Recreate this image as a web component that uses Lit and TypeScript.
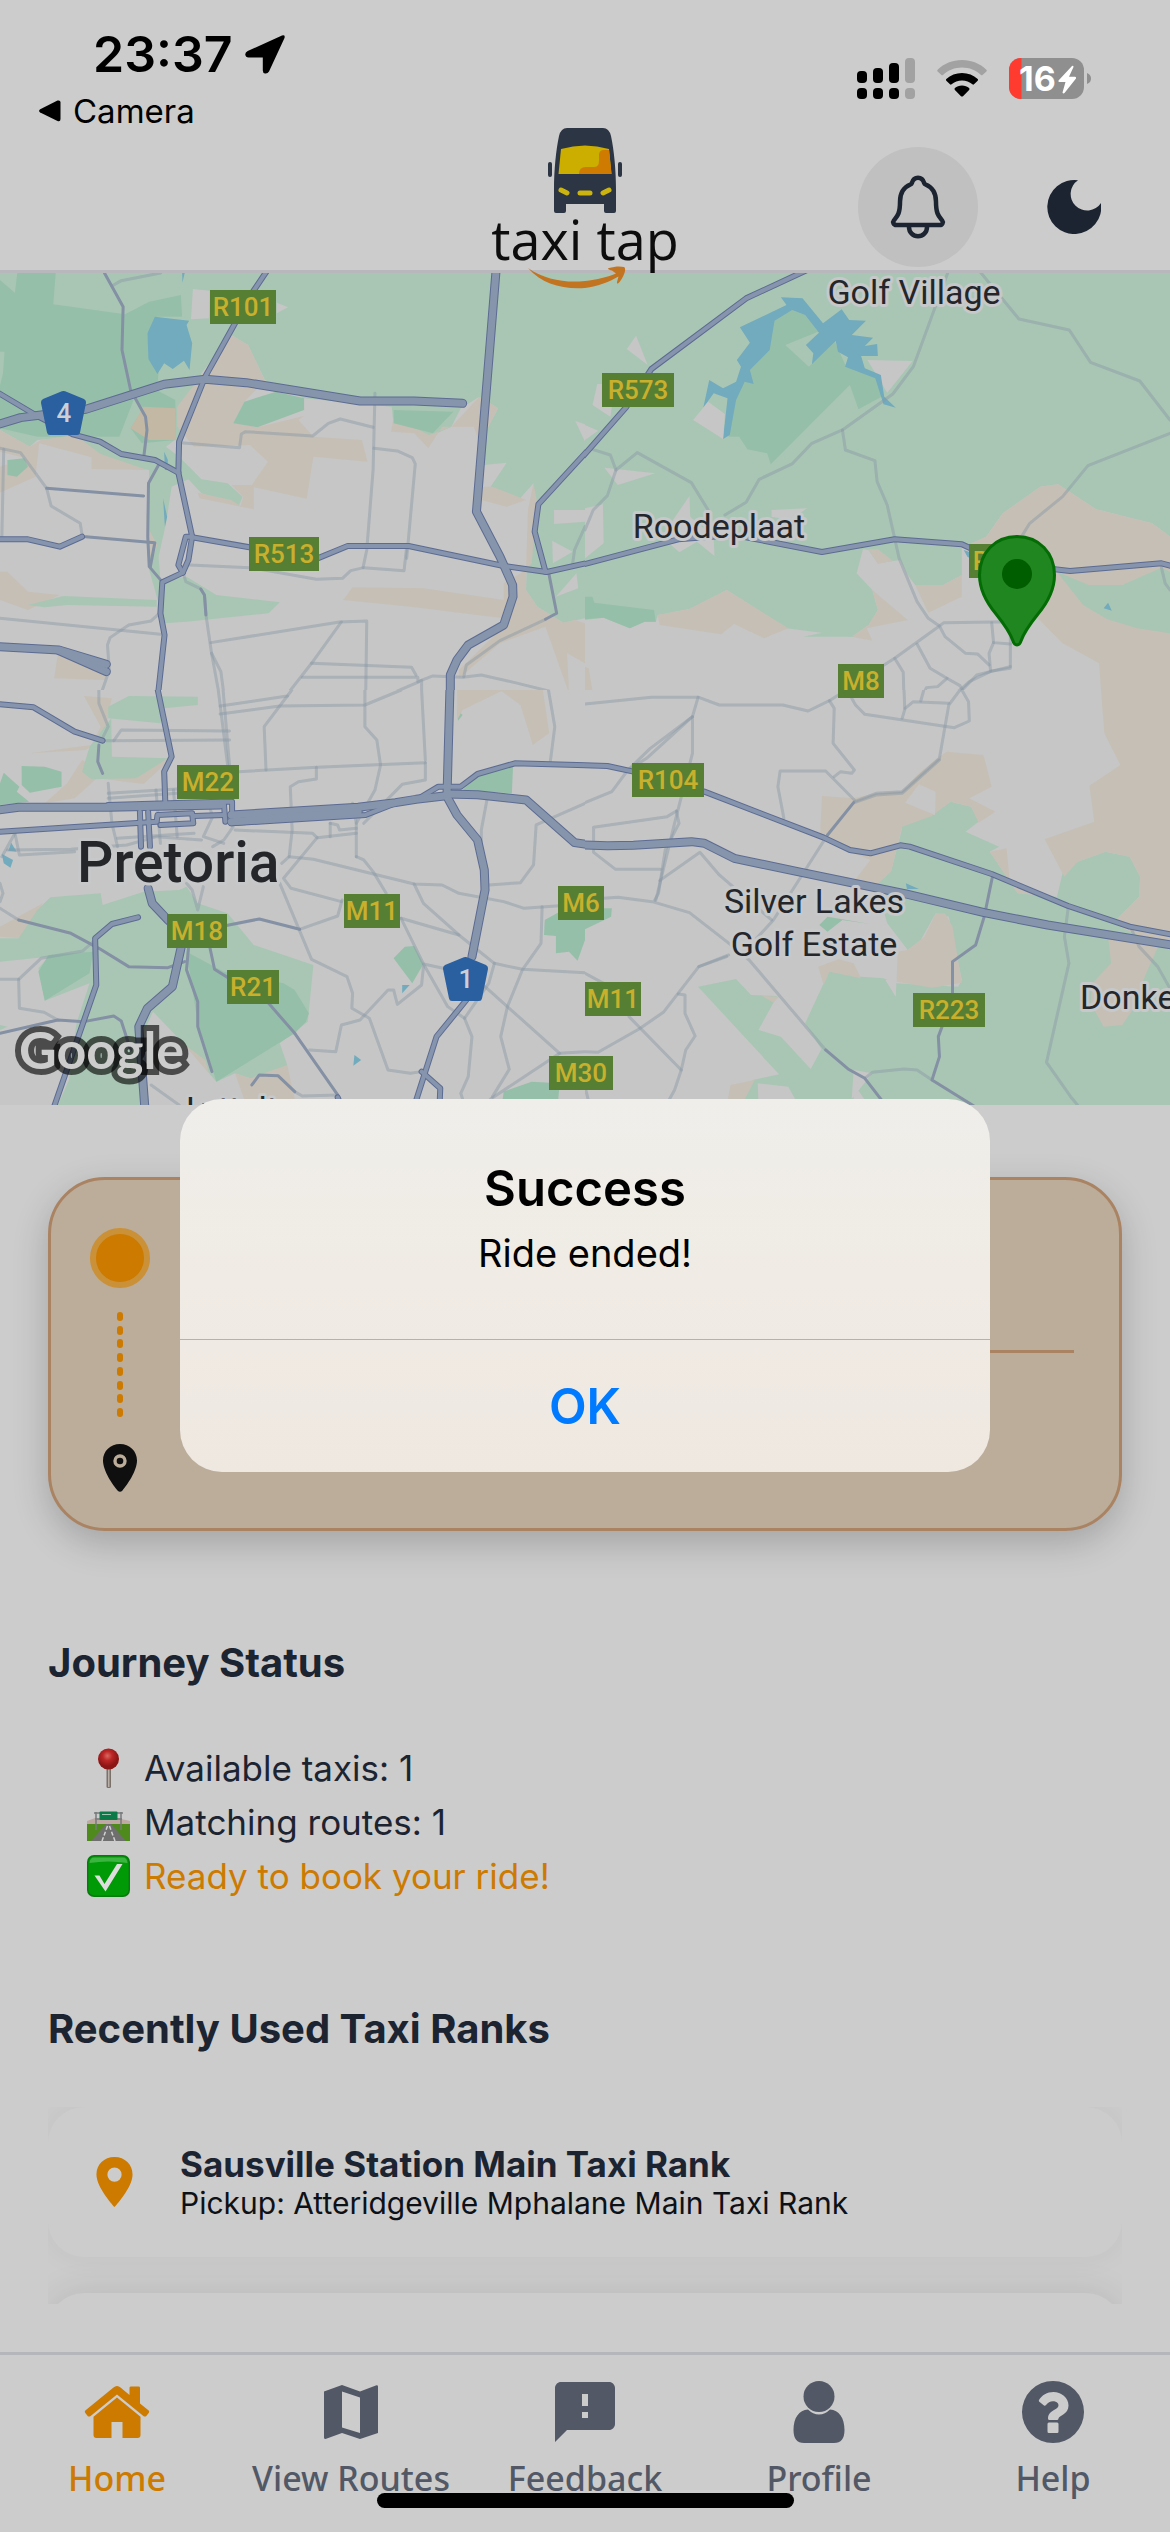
import { LitElement, html, svg, css } from "lit";
import { customElement, property } from "lit/decorators.js";
import { classMap } from "lit/directives/class-map.js";

interface Tile {
  id: string;
  x: number;
  y: number;
  /** Filled areas, painted in order: class name and polygon points. */
  areas: [string, string][];
  minor: string[];
  secondary: string[];
  major: string[];
  highway: string[];
}

/* Map geometry, held as four tiles of 1568 x 1290 units each. */
const TILES: Tile[] = [
  {
    id: "nw",
    x: 0,
    y: 270,
    areas: [
      ["park", "0,0 1568,0 1568,1045 1510,1058 1440,1010 1410,960 1412,890 1430,640 1390,690 1315,650 1358,578 1297,585 1290,510 1335,415 1285,380 1235,415 1210,470 1150,500 1055,470 1050,410 815,385 710,330 665,225 620,195 540,310 500,440 480,500 445,530 480,560 540,628 610,640 650,680 640,708 540,670 505,628 460,650 445,760 425,860 430,930 500,920 580,975 750,997 720,1030 500,1055 440,1060 400,900 400,600 330,585 270,560 210,500 100,510 80,530 0,480"],
      ["wood", "0,30 40,68 47,0 150,0 143,103 335,133 400,95 485,75 488,140 420,140 395,190 400,270 425,310 420,360 470,390 472,510 380,520 350,475 385,415 360,385 320,500 230,500 100,500 0,475"],
      ["park", "0,245 12,245 8,310 0,345"],
      ["sand", "0,480 80,530 110,510 200,495 270,552 395,600 245,597 245,562 105,520 95,620 0,668 0,590 70,565 0,545"],
      ["wood", "20,570 65,565 75,590 45,620 20,615"],
      ["sand", "620,195 665,225 710,332 655,395 625,460 690,472 815,438 800,450 840,500 970,510 985,575 840,560 822,686 680,652 680,718 535,685 530,668 620,690 645,708 652,680 620,645 675,645 718,575 670,525 520,530 475,470 475,410 530,330"],
      ["wood", "655,395 740,365 815,385 815,420 690,472 625,460"],
      ["field", "385,410 470,415 472,510 400,510 350,475"],
      ["sand", "1210,470 1285,380 1335,415 1285,520 1270,470 1185,470 1148,535 1110,490 1048,485 1055,440 1150,495"],
      ["wood", "1055,420 1215,425 1160,490 1055,460"],
      ["sand", "1290,650 1320,650 1410,690 1358,710 1290,690"],
      ["sand", "1415,720 1430,640 1440,700 1425,880 1410,900"],
      ["sand", "920,990 945,952 1135,955 1350,990 1350,940 1410,900 1410,960 1440,1010 1510,1058 1540,1050 1568,1060 1568,1180 1520,1150 1525,1270 1462,1070 1340,1120 1230,1225 1230,1200 1340,1080 1350,1045 1100,1010"],
      ["sand", "0,905 20,905 75,965 160,975 75,1020 0,990"],
      ["sand", "155,1155 290,1190 280,1230 145,1225"],
      ["sand", "225,1280 320,1270 310,1290 225,1290"],
      ["sand", "390,720 400,780 422,825 405,870 395,800"],
      ["park", "75,1005 170,978 420,990 420,1010 180,1005 120,1012"],
      ["park", "320,1290 350,1278 480,1278 540,1290"],
      ["land", "1485,720 1568,720 1568,755 1485,762"],
      ["land", "1480,812 1535,845 1482,880"],
      ["land", "1545,910 1550,955 1490,980"],
      ["land", "517,57 562,62 560,145 512,148"],
      ["land", "742,98 772,112 742,130"],
      ["land", "1542,453 1568,463 1568,515"],
      ["water", "415,140 507,152 500,165 515,220 508,300 493,272 463,297 440,280 422,312 398,268 395,190"],
      ["water", "488,0 495,9 489,38"],
      ["water", "440,545 450,570 448,600 442,600"],
      ["water", "437,685 448,740 442,770"],
    ],
    minor: [
      "300,48 325,32 430,9",
      "485,518 642,533 647,492 658,485 838,498 880,460 912,447 1000,472",
      "1005,370 1000,600 983,840 973,893",
      "1002,535 1065,543 1105,563 1113,582 1090,865",
      "1090,830 1083,902 975,893 940,902 918,925 848,928 670,893 508,885",
      "0,535 55,548 125,655 137,708 215,760 220,795",
      "10,538 5,800",
      "490,905 498,935 538,957 548,975 552,1035 567,1150 590,1290",
      "567,1150 592,1205 602,1290",
      "565,1118 910,1056 983,1053 980,1290",
      "915,1056 835,1180 765,1280 690,1290",
      "835,1180 1103,1192 1115,1215",
      "810,1222 1120,1222 1120,1235 1160,1218 1240,1222 1290,1215 1380,1238 1568,1290",
      "1010,1290 1130,1232 1130,1290",
      "0,1045 430,1093",
      "427,1030 405,1053 345,1065 295,1103 288,1125 293,1200 265,1290",
      "1243,1220 1250,1185 1340,1112 1462,1048",
      "1535,880 1540,840 1568,770",
      "1470,1270 1475,1290",
    ],
    secondary: [
      "280,9 330,110 327,240 350,360 390,440 394,480 386,555",
      "125,655 385,678",
      "230,800 415,818 403,890",
      "425,585 398,640 396,800 400,890 432,932",
      "538,957 548,975 552,1035",
      "1470,905 1492,1030 1462,1048",
    ],
    major: [
      "720,-5 672,75 590,240 550,320 480,515 478,608 515,800 505,870 490,908 435,937 430,1030 441,1095 422,1290",
      "515,800 498,800 478,885 490,908",
      "-10,365 100,438 195,493 268,515 325,552 415,570 478,608",
      "515,802 700,838 830,875 932,828 1095,828 1350,888 1465,906 1578,878",
      "-10,808 75,808 160,830 220,800",
      "1578,538 1443,703 1433,785 1462,905",
    ],
    highway: [
      "1330,-5 1277,725 1340,860 1374,945 1375,980 1350,1065 1255,1125 1225,1170 1207,1215 1207,1295",
      "-10,465 55,443 110,435 230,418 440,343 550,328 660,338 965,393 1110,393 1240,400",
      "-10,1130 158,1140 285,1183",
      "158,1142 285,1205",
    ],
  },
  {
    id: "ne",
    x: 585,
    y: 270,
    areas: [
      ["park", "0,0 1568,0 1568,800 1520,760 1370,718 1268,643 1220,650 1120,730 1075,800 1010,835 1010,915 960,945 885,945 865,915 845,870 785,880 760,840 745,838 728,910 770,960 785,1020 760,1065 715,1100 540,1075 380,960 280,1017 195,1035 190,1055 160,1055 120,1075 50,1043 0,1050"],
      ["sand", "195,1035 280,1017 380,960 545,1075 480,1105 400,1062 365,1093 200,1065"],
      ["sand", "760,838 785,838 825,872 785,882"],
      ["sand", "770,960 865,1050 755,1075 770,1112 715,1100 760,1065 785,1020"],
      ["sand", "885,945 960,945 1010,915 1010,980 920,1028"],
      ["sand", "1035,820 1075,800 1120,730 1220,650 1268,643 1370,718 1520,760 1568,800 1568,1290 1385,1290 1378,1180 1280,1120 1200,1030 1120,920 1050,880"],
      ["park", "1265,905 1350,945 1440,945 1545,893 1568,905 1568,1090 1480,1075 1400,1048 1335,1005"],
      ["park", "585,1100 700,1073 720,1100"],
      ["wood", "525,120 555,120 590,135 625,185 537,225 600,290 670,215 700,290 785,320 795,380 733,418 710,345 498,583 488,550 435,538 413,500 385,500 385,450 415,340 500,150"],
      ["wood", "0,980 20,980 25,998 185,1020 190,1055 160,1055 120,1075 50,1043 0,1048"],
      ["land", "137,197 168,285 112,237"],
      ["land", "33,342 45,342 45,400 72,410 68,440 20,405"],
      ["land", "0,465 35,482 0,510"],
      ["land", "757,270 878,273 810,368"],
      ["land", "52,593 188,610 88,645"],
      ["land", "280,678 282,740 345,800 347,858 300,815 253,847 205,800"],
      ["land", "500,720 595,715 550,750 500,740"],
      ["land", "0,715 48,703 50,820 0,865"],
      ["sand", "0,1190 10,1195 20,1262 0,1262"],
      ["water", "525,82 583,85 638,160 688,118 708,150 753,152 715,195 772,203 750,228 783,222 785,258 740,258 750,295 793,315 802,380 833,413 800,403 778,325 697,290 705,262 678,245 672,213 608,283 612,250 592,225 627,188 590,135 555,120 508,152 495,240 442,300 452,342 428,335 405,390 388,495 370,507 382,385 345,370 317,413 333,330 370,355 405,335 418,290 407,270 442,218 415,172 540,105"],
      ["land", "330,395 375,432 370,507 290,450"],
      ["water", "1402,998 1412,1022 1390,1015"],
      ["water", "1015,840 1040,850 1040,870 1025,860"],
    ],
    minor: [
      "975,0 880,290 825,372 690,480 608,520 555,582 467,628 432,697 375,735",
      "690,480 698,540 777,572 783,635 810,705 842,865 890,995 920,1045 950,1068 965,1100 1020,1150 1052,1152 1083,1185",
      "1055,0 1163,147 1298,180 1355,277 1487,333 1568,450",
      "1568,490 1348,587 1280,680 1192,760 1170,800",
      "20,538 68,555 83,600 60,677 22,720 0,780",
      "83,600 140,548 285,638 330,720",
      "650,1290 675,1275 830,1165 950,1068 962,1058 1140,1055 1140,1195 1090,1203 1030,1235 975,1290",
      "1140,1190 1050,1215 985,1290",
      "830,1165 853,1207 855,1290",
      "890,1122 925,1195 970,1225 945,1250 915,1253 900,1290",
      "970,1225 1005,1247 1027,1290",
      "1090,1058 1095,1118 1140,1122",
      "1095,1118 1083,1150 1087,1203",
      "0,1294 178,1282 305,1282 340,1290",
      "1545,893 1555,940 1568,960",
    ],
    secondary: [],
    major: [
      "605,-5 432,85 178,297 110,412 -10,565",
      "-10,885 250,808 400,795 635,846 830,808 1010,823 1120,880 1300,903 1545,880 1578,890",
    ],
    highway: [],
  },
  {
    id: "sw",
    x: 0,
    y: 690,
    areas: [
      ["sand", "225,18 300,25 290,70 285,140 230,180 80,190 245,165 270,110"],
      ["sand", "220,210 300,260 460,205 385,282 260,265 200,325 120,340 180,280"],
      ["sand", "0,710 115,640 60,745 0,740"],
      ["park", "290,50 345,18 530,20 530,45 440,55 430,100 290,85"],
      ["park", "240,170 298,85 300,200 450,205 365,265 245,268 220,245"],
      ["wood", "58,228 120,230 165,245 165,290 80,308 58,285"],
      ["wood", "10,248 52,290 45,305 78,335 0,345 0,280"],
      ["park", "0,745 50,745 100,660 135,622 270,610 275,645 385,605 480,600 500,590 530,640 610,670 680,765 840,825 825,995 790,1025 750,1060 770,1125 740,1160 670,1165 630,1150 580,1175 500,1070 410,965 380,1040 400,1245 155,1245 185,1170 205,1000 240,880 120,932 103,835 130,800 0,815"],
      ["wood", "500,785 600,845 760,880 790,900 828,970 820,995 790,1030 580,1175 530,1000"],
      ["wood", "103,845 130,795 250,785 240,850 120,932"],
      ["wood", "1240,300 1290,245 1375,230 1372,310"],
      ["wood", "1055,805 1085,770 1110,768 1135,822 1105,880"],
      ["wood", "1460,690 1500,665 1568,690 1568,750 1548,812 1525,785 1490,790 1490,738 1458,735"],
      ["wood", "1345,1245 1350,1205 1425,1175 1500,1180 1495,1245"],
      ["wood", "1225,60 1240,75 1228,92"],
      ["sand", "1225,0 1350,0 1240,60 1225,90"],
      ["sand", "1340,0 1455,0 1472,130 1428,165 1395,45"],
      ["sand", "490,1060 550,1110 560,1150"],
      ["sand", "630,1150 670,1165 770,1125 790,1227 660,1245"],
      ["park", "0,1005 20,1010 0,1020"],
      ["water", "30,458 45,485 22,482"],
      ["water", "5,492 35,510 28,533 10,520"],
      ["water", "1078,885 1098,885 1078,910"],
      ["water", "950,1095 968,1110 947,1127"],
    ],
    minor: [
      "265,0 265,40 290,110 270,155",
      "290,280 300,400 315,470",
      "285,152 615,150",
      "305,152 325,120 615,123",
      "585,0 610,225",
      "598,0 615,225",
      "590,48 770,18 782,0",
      "590,72 750,48 978,45 1075,0",
      "770,18 708,110 713,240",
      "978,0 978,110 1010,150 1020,225 1005,300 955,400 955,500",
      "1130,0 1140,210",
      "1140,218 1140,270 1078,283 975,400",
      "640,245 850,232 1140,218",
      "848,232 848,267 800,275 778,290 783,420 775,500 755,520",
      "290,310 475,297",
      "290,325 475,310",
      "418,300 430,460",
      "465,300 475,440",
      "630,420 838,430 850,443 955,430",
      "850,443 760,565 780,595 915,635",
      "775,500 840,508 1110,582 1185,585 1230,610 1350,635 1405,655 1500,647",
      "955,500 975,510 1000,545 1035,610",
      "1310,585 1395,578 1430,525 1437,405 1568,340",
      "1305,330 1290,420 1290,460",
      "750,580 835,808 930,860 945,910 943,955 990,985 1040,1140 1100,1150 1130,1145",
      "803,718 905,678 917,630",
      "1110,582 1135,640 1230,735 1325,820 1400,838 1568,848",
      "1075,685 1230,735",
      "1075,685 1135,822 1200,950 1245,985 1265,1040 1255,1160 1235,1210 1245,1245",
      "1135,822 1188,835",
      "1135,830 1130,885 1065,943 1055,900 1040,900 965,990 915,1005 900,1085 830,1080",
      "1453,650 1450,760 1400,840 1360,950 1342,1040 1365,1138 1320,1220",
      "1300,890 1500,1090 1568,1085",
      "1500,1090 1315,1227",
      "1325,820 1310,880 1245,985",
      "1470,0 1487,110 1475,215",
      "0,655 50,690",
      "250,755 222,783 110,805 50,868 0,868",
      "50,868 52,955 118,967 155,990",
      "560,345 570,380 545,440 600,460",
      "625,410 600,450 570,470",
      "315,445 520,430",
      "20,480 190,478 340,465 420,440 540,450",
      "40,430 52,495 200,485",
      "40,430 5,500",
      "0,580 8,610 0,635",
      "500,580 515,600 530,660 545,590",
      "945,340 955,400",
      "885,400 905,405 910,420 955,415",
      "885,400 885,440",
      "405,1185 480,1245",
      "905,1215 810,1218 790,1205",
    ],
    secondary: [
      "50,690 190,730 265,775 345,830 450,833 495,815",
      "505,775 500,840 530,935 530,1010 568,1145",
      "563,775 575,838 720,940 790,1030",
      "265,165 262,215 275,250",
      "675,1185 695,1155 745,1157 790,1205",
      "0,1030 155,990 225,995 305,978 325,993 350,1080",
      "600,708 695,687 803,718",
      "790,1030 905,1215",
    ],
    major: [
      "422,-5 460,200 440,245 443,335",
      "-10,42 90,52 200,125 275,152",
      "-10,426 420,395 422,375 515,370 518,400 430,405",
      "375,365 378,470",
      "397,365 402,470",
      "520,378 600,375",
      "370,682 300,702 255,745 258,885 145,1250",
      "1250,930 1170,1040 1110,1250",
      "1130,1145 1180,1195 1178,1250",
      "905,1222 915,1250",
      "1115,330 1175,290 1235,290 1280,252 1380,220 1578,226",
      "600,340 604,395",
      "290,345 590,335 622,335 622,370",
      "620,400 980,375 1060,340",
    ],
    highway: [
      "-10,361 50,352 190,352 290,352 590,345",
      "620,375 960,352 1060,338 1115,328 1190,318",
      "620,395 960,365",
      "1206,-5 1198,320 1225,375 1280,450 1298,540 1300,600 1265,800",
      "1198,312 1280,314 1410,330 1540,458 1578,464",
      "397,595 408,640 450,690 480,720",
      "485,775 462,890 395,955 372,1010 388,1250",
    ],
  },
  {
    id: "se",
    x: 585,
    y: 690,
    areas: [
      ["park", "825,402 930,375 980,335 1035,350 1055,395 1020,425 1110,470 1085,485 1160,610 1265,620 1280,550 1320,515 1395,485 1460,500 1488,560 1485,620 1415,700 1568,780 1568,1245 760,1245 700,1150 635,1080 590,1000 655,843 740,860 800,865 835,880 1000,890 1010,870 975,680 940,670 900,750 865,780 810,700 780,585 820,545 850,415"],
      ["park", "303,890 405,867 445,915 515,918 465,1020 525,1040 605,1137 635,1075 720,1150 720,1245 410,1245 450,1170 520,1153"],
      ["sand", "635,318 720,325 780,310 850,303 895,250 950,200 970,185 1068,195 1090,290 1030,325 1100,365 1055,398 1035,350 980,335 930,378 850,410 820,545 780,585 720,575 765,510 700,480 630,440"],
      ["land", "895,283 940,305 938,375 858,338"],
      ["sand", "1383,0 1568,0 1568,780 1415,700 1485,620 1488,560 1460,500 1395,485 1320,515 1285,560 1232,448 1365,395 1352,287 1435,225 1392,130"],
      ["sand", "940,670 965,670 985,710 1010,878 930,893 835,875 838,785 865,780 910,740"],
      ["sand", "625,830 680,808 720,820 740,865 655,845 640,885"],
      ["sand", "1400,720 1540,760 1500,860 1480,940 1440,1005 1390,1010 1355,940 1360,880 1410,820"],
      ["sand", "1085,485 1130,475 1138,570 1210,615 1160,610"],
      ["sand", "390,1185 455,1170 420,1245 380,1245"],
      ["sand", "475,918 520,920 505,938"],
      ["land", "805,870 835,865 833,920"],
      ["land", "720,1140 770,1150 715,1227"],
      ["land", "463,1180 545,1190 572,1245 465,1245"],
      ["wood", "0,670 50,655 72,655 70,680 0,718"],
      ["wood", "628,705 650,680 765,702 690,690 650,725"],
      ["water", "860,580 895,597 863,597"],
    ],
    minor: [
      "0,42 178,22 305,22 360,45 530,45 598,63 655,32 700,0",
      "303,22 288,80 175,175 115,240 72,305 0,338",
      "288,80 288,190 240,400 190,630",
      "288,80 165,205 115,240",
      "655,32 668,55 665,160 722,240 715,250 685,245 668,260",
      "533,385 517,290 523,243 645,243 722,330",
      "650,435 505,690 460,745",
      "722,335 780,310 850,305 950,205 975,45 1005,0",
      "722,338 780,315 850,310 950,210",
      "715,25 725,45 750,73 990,113 1030,93 1028,35 1010,0",
      "850,85 858,55 880,35 975,40",
      "855,0 857,55",
      "908,0 900,33",
      "245,363 220,380 23,412 23,487 82,538 203,538",
      "245,363 252,400 215,480 197,610 187,630",
      "200,572 308,487 360,555 500,690",
      "50,625 88,622 180,635 280,668 380,755 440,810 645,1080",
      "385,795 305,830 210,967 145,1017 35,1087 0,1085",
      "380,800 305,830",
      "250,912 268,915 268,970 295,1038 270,1080 258,1140 240,1200 218,1245",
      "118,980 258,1140",
      "0,850 50,880",
      "1295,655 1285,740 1297,820 1237,1117 1305,1225 1320,1245",
      "1465,718 1485,770 1535,830 1565,890",
      "750,1165 770,1147 855,1137 890,1140 930,1170",
      "0,1190 12,1245",
    ],
    secondary: [
      "1093,555 1070,680 1047,765 985,815 985,910",
      "957,1010 947,1040 950,1100 930,1170 1045,1250",
      "645,1080 705,1137 750,1165 805,1245",
      "720,338 650,435",
    ],
    major: [
      "-10,225 60,228 130,245 320,305 640,443 710,480 765,490 845,466 870,470 1090,552 1295,648 1460,710 1578,735",
    ],
    highway: [
      "-10,465 60,467 130,466 285,455 320,460 400,505 570,545 860,612 1070,668 1240,705 1578,766",
    ],
  },
];

/* Route badges: label, left, top, width. */
const BADGES: [string, number, number, number][] = [
  ["R101", 210, 290, 66],
  ["R573", 602, 373, 72],
  ["R513", 249, 537, 70],
  ["R", 969, 544, 36],
  ["M8", 838, 664, 46],
  ["M22", 177, 765, 62],
  ["R104", 632, 763, 72],
  ["M6", 558, 886, 46],
  ["M11", 344, 894, 56],
  ["M18", 167, 914, 60],
  ["R21", 227, 970, 52],
  ["M11", 585, 982, 56],
  ["R223", 913, 993, 72],
  ["M30", 549, 1056, 64],
];

const PLACES: [string, number, number][] = [
  ["Golf Village", 914, 304],
  ["Roodeplaat", 719, 538],
  ["Silver Lakes", 814, 913],
  ["Golf Estate", 814, 956],
];

@customElement("route-map")
class RouteMap extends LitElement {
  static styles = css`
    :host {
      display: block;
    }
    .map {
      display: block;
      width: 100%;
      height: auto;
      font-family: Roboto, "Liberation Sans", sans-serif;
    }
    .land { fill: #c6c6c6; }
    .park { fill: #a9c6b4; }
    .wood { fill: #96bfa9; }
    .sand { fill: #c6bfb5; }
    .field { fill: #c3b8a4; }
    .water { fill: #71abbd; }
    .road {
      fill: none;
      stroke-linejoin: round;
      stroke-linecap: round;
      vector-effect: non-scaling-stroke;
    }
    .minor { stroke: #8797a4; stroke-opacity: 0.45; stroke-width: 3px; }
    .secondary { stroke: #8490a4; stroke-width: 3px; }
    .major-case { stroke: #5c6b92; stroke-width: 6px; }
    .major { stroke: #8695ad; stroke-width: 4px; }
    .highway-case { stroke: #5c6b92; stroke-width: 9px; }
    .highway { stroke: #8695ab; stroke-width: 7px; }
    .place {
      font-size: 34px;
      text-anchor: middle;
      fill: #24262a;
      stroke: #c6c8ca;
      stroke-width: 6px;
      stroke-linejoin: round;
      paint-order: stroke;
    }
    .edge { text-anchor: start; }
    .city { font-size: 57px; font-weight: 500; }
    .badge { fill: #577f34; }
    .route {
      font-size: 26px;
      font-weight: 500;
      text-anchor: middle;
      fill: #c9b02c;
    }
    .shield { fill: #2a5fa0; }
    .national {
      font-size: 26px;
      font-weight: 500;
      text-anchor: middle;
      fill: #ccd0d6;
    }
    .google {
      font-family: Lato, sans-serif;
      font-size: 52px;
      font-weight: 700;
      fill: #cccccc;
      stroke: #000000;
      stroke-opacity: 0.62;
      stroke-width: 12px;
      paint-order: stroke;
    }
    .pin { fill: #20861f; stroke: #046c04; stroke-width: 3px; }
    .pin-hole { fill: #005d00; }
  `;

  private tile(t: Tile) {
    const line = (kind: string) => (p: string) =>
      svg`<polyline class="road ${kind}" points=${p} />`;
    return svg`
      <clipPath id=${"clip-" + t.id}><rect width="1570" height="1290" /></clipPath>
      <g transform=${`translate(${t.x} ${t.y}) scale(.3731 .3333)`}>
        <g clip-path=${`url(#clip-${t.id})`}>
          <rect class="land" width="1570" height="1290" />
          ${t.areas.map(([kind, p]) => svg`<polygon class=${kind} points=${p} />`)}
          ${t.minor.map(line("minor"))}
          ${t.secondary.map(line("secondary"))}
          ${t.major.map(line("major-case"))}
          ${t.highway.map(line("highway-case"))}
          ${t.major.map(line("major"))}
          ${t.highway.map(line("highway"))}
        </g>
      </g>`;
  }

  private shield(label: string, x: number, y: number) {
    return svg`
      <g transform=${`translate(${x} ${y})`}>
        <path class="shield" d="M22.500 0Q24 0 26 1L43 8Q45.500 9.500 45 12L39 41.500Q38.500 44 36 44H9Q6.500 44 6 41.500L0 12Q-.5 9.500 2 8L19 1Q21 0 22.500 0Z" />
        <text class="national" x="23" y="31">${label}</text>
      </g>`;
  }

  render() {
    return html`
      <svg class="map" viewBox="0 273 1170 832" role="img" aria-label="Map of Pretoria">
        ${TILES.map((t) => this.tile(t))}
        ${PLACES.map(([name, x, y]) => svg`<text class="place" x=${x} y=${y}>${name}</text>`)}
        <text class="place edge" x="1080" y="1009">Donke</text>
        <text class="place edge" x="186" y="1121">Lyttelton</text>
        <text class="place city edge" x="77" y="882">Pretoria</text>
        ${BADGES.map(
          ([label, x, y, w]) => svg`
            <rect class="badge" x=${x} y=${y} width=${w} height="34" />
            <text class="route" x=${label === "R" ? x + 12 : x + w / 2} y=${y + 26}>${label}</text>`
        )}
        ${this.shield("4", 41, 391)} ${this.shield("1", 443, 957)}
        <text class="google" x="19" y="1069">Google</text>
        <path class="pin" d="M1017 536.500C995 536.500 979.500 553 979.500 575C979.500 590 986 602 996 614C1004 624 1010 632 1013 641Q1014 645 1017 645Q1020 645 1021 641C1024 632 1030 624 1038 614C1048 602 1054.500 590 1054.500 575C1054.500 553 1039 536.500 1017 536.500Z" />
        <circle class="pin-hole" cx="1017" cy="574" r="15" />
      </svg>
    `;
  }
}

@customElement("status-bar")
class StatusBar extends LitElement {
  static styles = css`
    :host {
      display: flex;
      justify-content: space-between;
      height: 126px;
      padding: 24px 79px 0 39px;
      box-sizing: border-box;
      color: #000000;
    }
    .clock {
      display: flex;
      align-items: center;
      gap: 12px;
      padding-left: 54px;
      font-size: 50px;
      font-weight: 600;
      line-height: 60px;
    }
    .back {
      display: flex;
      align-items: center;
      gap: 12px;
      margin-top: 6px;
      font-size: 33px;
      line-height: 42px;
      color: inherit;
      text-decoration: none;
    }
    .icons {
      display: flex;
      align-items: center;
      gap: 22px;
      height: 108px;
    }
    svg {
      display: block;
    }
    .dim { fill: #a2a2a2; }
    .shell { fill: #8f8f8f; }
    .low { fill: #ff3b30; }
    .charge {
      font-family: Inter, sans-serif;
      font-size: 34px;
      font-weight: 700;
      fill: #ffffff;
    }
    .bolt { fill: #ffffff; }
  `;

  render() {
    return html`
      <div>
        <div class="clock">
          <span>23:37</span>
          <svg width="40" height="39" viewBox="0 0 40 39" aria-hidden="true">
            <path d="M37 .4Q40.500-.5 39.500 3L24 36.500Q22.500 39 20 38.500Q17.800 38 17.800 35.500V22.500H3.500Q.6 22.300 .3 19.800Q0 17.500 2.700 16Z" />
          </svg>
        </div>
        <a class="back" href="#camera">
          <svg width="22" height="22" viewBox="0 0 22 22" aria-hidden="true">
            <path d="M1.200 9.200L18.500 .6Q21.500-.2 21.500 2.500V19Q21.500 22 18.500 21L1.200 12.600Q-1 10.900 1.200 9.200Z" />
          </svg>
          <span>Camera</span>
        </a>
      </div>
      <div class="icons">
        <svg width="58" height="41" viewBox="0 0 58 41" aria-hidden="true">
          <rect x="0" y="13" width="10" height="12" rx="4" />
          <rect x="16" y="10" width="10" height="15" rx="4" />
          <rect x="32" y="5" width="10" height="20" rx="4" />
          <rect class="dim" x="48" y="0" width="10" height="25" rx="4" />
          <rect x="0" y="30" width="10" height="11" rx="4" />
          <rect x="16" y="30" width="10" height="11" rx="4" />
          <rect x="32" y="30" width="10" height="11" rx="4" />
          <rect class="dim" x="48" y="30" width="10" height="11" rx="4" />
        </svg>
        <svg width="50" height="37" viewBox="0 0 50 37" aria-hidden="true">
          <path class="dim" d="M25 0C15.500 0 7 3.600 .6 9.700Q-.2 10.500 .6 11.400L4.500 15Q5.300 15.700 6 15C11 10.200 17.700 7.500 25 7.500S39 10.200 44 15Q44.700 15.700 45.500 15L49.400 11.400Q50.200 10.500 49.400 9.700C43 3.600 34.500 0 25 0Z" />
          <path d="M25 13C19 13 13.500 15.200 9.300 19Q8.500 19.900 9.300 20.700L13 24.300Q13.800 25 14.600 24.300C17.400 22 21 20.500 25 20.500S32.600 22 35.400 24.300Q36.200 25 37 24.300L40.700 20.700Q41.500 19.900 40.700 19C36.500 15.200 31 13 25 13Z" />
          <path d="M25 25.500C22.200 25.500 19.700 26.500 17.900 28.100Q17 29 17.900 29.900L24 36.200Q25 37 26 36.200L32.100 29.900Q33 29 32.100 28.100C30.300 26.500 27.800 25.500 25 25.500Z" />
        </svg>
        <svg width="82" height="41" viewBox="0 0 82 41" role="img" aria-label="Battery">
          <rect class="shell" width="75" height="41" rx="12" />
          <path class="low" d="M12 0H12.500V41H12A12 12 0 0 1 0 29V12A12 12 0 0 1 12 0Z" />
          <path class="shell" d="M78 15Q82 16.500 82 20.500T78 26Z" />
          <text class="charge" x="10" y="33">16</text>
          <path class="bolt" d="M63 8L49.500 22.500Q49 24 50.500 24H56.500L53.500 34.500Q54 36 55.500 35L67 20.500Q67.500 19 66 18.800H60L64.500 9Q64.500 7 63 8Z" />
        </svg>
      </div>
    `;
  }
}

@customElement("app-header")
class AppHeader extends LitElement {
  static styles = css`
    :host {
      display: block;
      position: relative;
      z-index: 1;
      background: #cccccc;
      border-bottom: 3px solid #b7b7bc;
    }
    .row {
      display: grid;
      grid-template-columns: 1fr auto 1fr;
      height: 144px;
    }
    .logo {
      grid-column: 2;
      display: block;
      margin-bottom: -24px;
    }
    .word {
      font-family: "Open Sans", "Noto Sans", sans-serif;
      font-size: 54px;
      fill: #0d0d0d;
      text-anchor: middle;
    }
    .body { fill: #2b3543; }
    .glass { fill: #cbae00; }
    .seat { fill: #cf7a00; }
    .lamp { stroke: #cbb410; stroke-width: 5px; stroke-linecap: round; }
    .swoosh { fill: #c37420; }
    .actions {
      display: flex;
      align-items: center;
      justify-content: flex-end;
      gap: 69px;
      padding: 18px 69px 0 0;
    }
    .action {
      display: grid;
      place-items: center;
      padding: 0;
      border: 0;
      background: none;
      color: #1c2431;
    }
    .round {
      width: 120px;
      height: 120px;
      border-radius: 50%;
      background: #c0c0c0;
    }
    .outline {
      fill: none;
      stroke: currentColor;
      stroke-width: 32px;
      stroke-linecap: round;
      stroke-linejoin: round;
    }
  `;

  render() {
    return html`
      <status-bar></status-bar>
      <div class="row">
        <svg class="logo" width="192" height="168" viewBox="489 126 192 168" role="img" aria-label="taxi tap">
          <path class="body" d="M567 128H603Q609 128 611 136C614 150 616 170 616 190V211Q616 213 614 213H606Q604 213 604 211V204H566V211Q566 213 564 213H556Q554 213 554 211V190C554 170 556 150 559 136Q561 128 567 128Z" />
          <rect class="body" x="548" y="162" width="4" height="15" rx="2" />
          <rect class="body" x="618" y="162" width="4" height="15" rx="2" />
          <path class="glass" d="M561 149Q585 142 609 149L611.500 174H558.500Z" />
          <path class="seat" d="M579 174Q579 167 586 167H594Q599 167 599 161V155Q599 150 604 150H609L611.500 174Z" />
          <path class="lamp" d="M561 190L567 193M580 193H590M603 193L609 190" />
          <text class="word" x="585" y="260">taxi tap</text>
          <path class="swoosh" d="M528 268C545 280 566 283 585 281C597 279.500 608 277 616 273.500L612 270.500C608 269.500 607 268.500 609 268C614 266.500 620 266 624 267Q626 268 624.500 273Q622 280 618 283.500Q616.500 284 617 282L618.500 276.500C610 281.500 598 286.500 585 288C562 289.500 542 284 528 268Z" />
        </svg>
        <div class="actions">
          <button class="action round" type="button" aria-label="Notifications">
            <svg width="72" height="72" viewBox="0 0 512 512">
              <path class="outline" d="M427.680 351.430C402 320 383.870 304 383.870 217.350 383.870 138 343.350 109.730 310 96c-4.430-1.820-8.600-6-9.950-10.550C294.200 65.540 277.800 48 256 48s-38.210 17.550-44 37.470c-1.350 4.600-5.520 8.710-9.950 10.530-33.390 13.750-73.870 41.920-73.870 121.350C128.130 304 110 320 84.320 351.430 73.680 364.450 83 384 101.610 384h308.880c18.510 0 27.770-19.610 17.190-32.570zM320 384v16a64 64 0 0 1-128 0v-16" />
            </svg>
          </button>
          <button class="action" type="button" aria-label="Dark mode">
            <svg width="54" height="54" viewBox="0 0 54 54">
              <path fill="currentColor" d="M31 .3A27 27 0 1 0 54 23A16.500 16.500 0 1 1 31 .3Z" />
            </svg>
          </button>
        </div>
      </div>
    `;
  }
}

const NAV_ICONS = {
  home: svg`<path d="M36 10Q34 10 32.500 11.500L4.300 34.500Q3.200 35.800 4.300 37L6.900 40.200Q8.100 41 9.300 40.200L36 18.500L62.700 40.200Q63.900 41 65.100 40.200L67.700 37Q68.800 35.800 67.700 34.500L59 27.500V11.800Q59 10.500 57.500 10.500H50Q48.500 10.500 48.500 11.800V19L39.500 11.500Q38 10 36 10ZM36 21.500L12.500 40.700V59Q12.500 62 15.500 62H30.500V46H41.500V62H56.500Q59.500 62 59.500 59V40.700Z" />`,
  map: svg`<path fill-rule="evenodd" d="M9 15.500L27 9L45 15.500L61.500 9.200Q63 9 63 10.500V57L45 63L27 57L10.500 63Q9 63 9 61.500ZM27 15.500V51.500L45 57V21.500Z" />`,
  feedback: svg`<path fill-rule="evenodd" d="M60 6H12C8.700 6 6 8.700 6 12V66L18 54H60C63.300 54 66 51.300 66 48V12C66 8.700 63.300 6 60 6ZM39 42H33V36H39ZM39 30H33V18H39Z" />`,
  profile: svg`<circle cx="36" cy="20.500" r="15.500" /><path d="M25 33.500C16 34 10.500 42 10.500 54Q10.500 67 21 67H51Q61.500 67 61.500 54C61.500 42 56 34 47 33.500Q42 38.500 36 38.500T25 33.500Z" />`,
  help: svg`<path fill-rule="evenodd" d="M36 5A31 31 0 1 1 36 67A31 31 0 1 1 36 5ZM36.500 16C30 16 25 19 22 24Q21.400 25 22.300 25.800L27 29.500Q28 30 28.800 29.200C31 26.500 33 25.200 36 25.200C39 25.200 41.500 26.800 41.500 29.200C41.500 31.500 39.500 32.500 37 34C34 35.700 31 38 31 42.500Q31 44 32.500 44H40Q41.300 44 41.500 42.500C41.800 39.500 51.500 38.500 51.500 29.500C51.500 21.500 44 16 36.500 16ZM31.800 46.500Q30.500 46.500 30.500 48V55.500Q30.500 57 31.800 57H40.200Q41.500 57 41.500 55.500V48Q41.500 46.500 40.200 46.500Z" />`,
};

@customElement("tab-bar")
class TabBar extends LitElement {
  static styles = css`
    :host {
      display: block;
      position: relative;
      background: #cccccc;
      border-top: 3px solid #b4b6bb;
    }
    .tabs {
      display: flex;
      padding: 21px 0 33px;
    }
    .tab {
      flex: 1;
      display: flex;
      flex-direction: column;
      align-items: center;
      gap: 9px;
      font-family: "Noto Sans", "Open Sans", sans-serif;
      font-size: 34px;
      font-weight: 500;
      line-height: 42px;
      color: #525866;
      text-decoration: none;
    }
    .active {
      color: #cc7a00;
    }
    .icon {
      fill: currentColor;
    }
    .indicator {
      position: absolute;
      bottom: 24px;
      left: 50%;
      width: 417px;
      height: 15px;
      margin-left: -208px;
      border-radius: 8px;
      background: #000000;
    }
  `;

  @property() current = "Home";

  private tabs: [string, unknown][] = [
    ["Home", NAV_ICONS.home],
    ["View Routes", NAV_ICONS.map],
    ["Feedback", NAV_ICONS.feedback],
    ["Profile", NAV_ICONS.profile],
    ["Help", NAV_ICONS.help],
  ];

  render() {
    return html`
      <nav class="tabs">
        ${this.tabs.map(
          ([label, icon]) => html`
            <a class=${classMap({ tab: true, active: label === this.current })} href="#">
              <svg class="icon" width="72" height="72" viewBox="0 0 72 72" aria-hidden="true">${icon}</svg>
              <span>${label}</span>
            </a>
          `
        )}
      </nav>
      <div class="indicator"></div>
    `;
  }
}

@customElement("success-dialog")
class SuccessDialog extends LitElement {
  static styles = css`
    :host {
      position: absolute;
      inset: 0;
      z-index: 2;
      display: grid;
      place-items: center;
      padding: 141px 0 102px;
    }
    .dialog {
      width: 810px;
      border-radius: 42px;
      overflow: hidden;
      background: linear-gradient(#efeeea, #f0ebe4 50%, #eee8e1);
      color: #000000;
      text-align: center;
    }
    .text {
      padding: 60px 48px 62px;
      border-bottom: 1px solid #b9b1a5;
    }
    .title {
      margin: 0;
      font-size: 49px;
      font-weight: 600;
      line-height: 60px;
    }
    .message {
      margin: 10px 0 0;
      font-size: 38px;
      line-height: 48px;
    }
    .ok {
      display: block;
      width: 100%;
      height: 132px;
      padding: 0;
      border: 0;
      background: none;
      font: inherit;
      font-size: 49px;
      font-weight: 600;
      color: #007aff;
    }
  `;

  render() {
    return html`
      <div class="dialog" role="alertdialog" aria-labelledby="title" aria-describedby="message">
        <div class="text">
          <h1 class="title" id="title">Success</h1>
          <p class="message" id="message">Ride ended!</p>
        </div>
        <button class="ok" type="button">OK</button>
      </div>
    `;
  }
}

@customElement("app-root")
class AppRoot extends LitElement {
  static styles = css`
    :host {
      display: flex;
      flex-direction: column;
      position: relative;
      min-height: 100vh;
      background: #cccccc;
      color: #1c2431;
      font-family: Inter, "Liberation Sans", sans-serif;
    }
    .content {
      flex: 1;
      padding: 72px 48px 48px;
    }
    .journey {
      display: flex;
      gap: 72px;
      padding: 48px 45px 36px 39px;
      border: 3px solid #aa8363;
      border-radius: 57px;
      background: #bcad9b;
      box-shadow: 0 12px 36px rgba(0, 0, 0, 0.2);
    }
    .stops {
      display: flex;
      flex-direction: column;
      align-items: center;
    }
    .origin {
      width: 48px;
      height: 48px;
      border: 6px solid #ca9138;
      border-radius: 50%;
      background: #cc7a00;
    }
    .dots {
      display: flex;
      flex-direction: column;
      justify-content: space-between;
      height: 105px;
      margin: 24px 0 27px;
    }
    .dot {
      width: 6px;
      height: 9px;
      border-radius: 3px;
      background: #cc7a00;
    }
    .divider {
      flex: 1;
      height: 3px;
      margin: 122px 0 0;
      border: 0;
      background: #aa8363;
    }
    .heading {
      margin: 0 0 54px;
      font-size: 40px;
      font-weight: 700;
      line-height: 48px;
    }
    .status {
      margin-top: 108px;
    }
    .facts {
      margin: 0;
      padding: 0 0 0 39px;
      list-style: none;
      font-size: 35px;
      line-height: 54px;
    }
    .fact {
      display: flex;
      align-items: center;
      gap: 14px;
    }
    .ready {
      color: #cc7a00;
    }
    .recent {
      margin-top: 102px;
    }
    .ranks {
      display: flex;
      flex-direction: column;
      gap: 36px;
      height: 197px;
      margin: 0;
      padding: 0;
      overflow: hidden;
      list-style: none;
    }
    .rank {
      position: relative;
      z-index: 1;
      flex: none;
      display: flex;
      align-items: center;
      gap: 35px;
      min-height: 78px;
      padding: 36px;
      border-radius: 36px;
      background: #cccccc;
      box-shadow: 0 0 30px rgba(0, 0, 0, 0.05);
    }
    .next {
      z-index: 0;
      box-shadow: 0 0 36px rgba(0, 0, 0, 0.1);
    }
    .rank-pin {
      fill: #cc7a00;
    }
    .rank-name {
      margin: 0;
      font-size: 35px;
      font-weight: 700;
      line-height: 42px;
    }
    .rank-from {
      margin: 0;
      font-size: 30px;
      line-height: 36px;
      color: #0d1117;
    }
  `;

  render() {
    return html`
      <app-header></app-header>
      <route-map></route-map>
      <main class="content">
        <section class="journey" aria-label="Journey">
          <div class="stops">
            <div class="origin"></div>
            <div class="dots">${Array.from({ length: 8 }, () => html`<span class="dot"></span>`)}</div>
            <svg width="34" height="48" viewBox="0 0 34 48" aria-hidden="true">
              <path fill="#0f0f0f" fill-rule="evenodd" d="M17 0C7.500 0 0 7 0 16.500C0 27 10 41 14.500 46.500Q17 49 19.500 46.500C24 41 34 27 34 16.500C34 7 26.500 0 17 0ZM17 10.300A6.700 6.700 0 1 1 17 23.700A6.700 6.700 0 1 1 17 10.300Z" />
              <circle cx="17" cy="17" r="3.300" fill="#0f0f0f" />
            </svg>
          </div>
          <hr class="divider" />
        </section>

        <section class="status">
          <h2 class="heading">Journey Status</h2>
          <ul class="facts">
            <li class="fact">
              <svg width="43" height="42" viewBox="0 0 43 42" aria-hidden="true">
                <defs>
                  <radialGradient id="ball" cx=".45" cy=".35">
                    <stop offset="0" stop-color="#d86a62" />
                    <stop offset=".45" stop-color="#bd2626" />
                    <stop offset="1" stop-color="#8c1515" />
                  </radialGradient>
                </defs>
                <rect x="19.500" y="20" width="4.500" height="21" rx="1.500" fill="#7b716b" />
                <rect x="21" y="20" width="1.500" height="20" fill="#b9b0aa" />
                <circle cx="21.500" cy="12" r="10.500" fill="url(#ball)" />
              </svg>
              <span>Available taxis: 1</span>
            </li>
            <li class="fact">
              <svg width="43" height="42" viewBox="0 0 43 42" aria-hidden="true">
                <path fill="#bfa9a4" d="M0 20L8 17L16 19L30 17L43 20V24H0Z" />
                <path fill="#4f8a1d" d="M0 23H43V40H0Z" />
                <path fill="#6f6f6f" d="M19 23H24L39 40H4Z" />
                <path fill="none" stroke="#d0d0d0" stroke-width="1.500" stroke-dasharray="4 2" d="M20.500 25L15 40M22.500 25L28 40" />
                <path fill="none" stroke="#777b7b" stroke-width="1.500" d="M9 29V11M34 29V11M7 12H36M8 18H35" />
                <rect x="12.500" y="10.500" width="18" height="8.500" rx="1" fill="#0b7a48" />
                <path stroke="#9cc5af" d="M15 13.500H24" />
              </svg>
              <span>Matching routes: 1</span>
            </li>
            <li class="fact ready">
              <svg width="43" height="42" viewBox="0 0 43 42" aria-hidden="true">
                <rect width="43" height="42" rx="7" fill="#067c0d" />
                <rect x="1.500" y="1.500" width="40" height="39" rx="6" fill="#019a07" />
                <path fill="#3cb440" d="M7 2.500H36Q40 2.500 40.500 8Q21 5 2.500 8Q3 2.500 7 2.500Z" />
                <path fill="#dddddd" d="M7.500 20.500H12.500L17.500 29L30 9H35.500L18.500 36.500Z" />
              </svg>
              <span>Ready to book your ride!</span>
            </li>
          </ul>
        </section>

        <section class="recent">
          <h2 class="heading">Recently Used Taxi Ranks</h2>
          <ul class="ranks">
            <li class="rank">
              <svg class="rank-pin" width="61" height="64" viewBox="0 0 24 24" aria-hidden="true">
                <path fill-rule="evenodd" d="M12 2.200C7.900 2.200 4.900 5.200 4.900 9c0 5.200 7.100 12.800 7.100 12.800s7.100-7.600 7.100-12.800c0-3.800-3-6.800-7.100-6.800zM12 6.300a2.800 2.800 0 1 1 0 5.600a2.800 2.800 0 1 1 0-5.600z" />
              </svg>
              <div>
                <h3 class="rank-name">Sausville Station Main Taxi Rank</h3>
                <p class="rank-from">Pickup: Atteridgeville Mphalane Main Taxi Rank</p>
              </div>
            </li>
            <li class="rank next" aria-hidden="true"></li>
          </ul>
        </section>
      </main>
      <tab-bar></tab-bar>
      <success-dialog></success-dialog>
    `;
  }
}
